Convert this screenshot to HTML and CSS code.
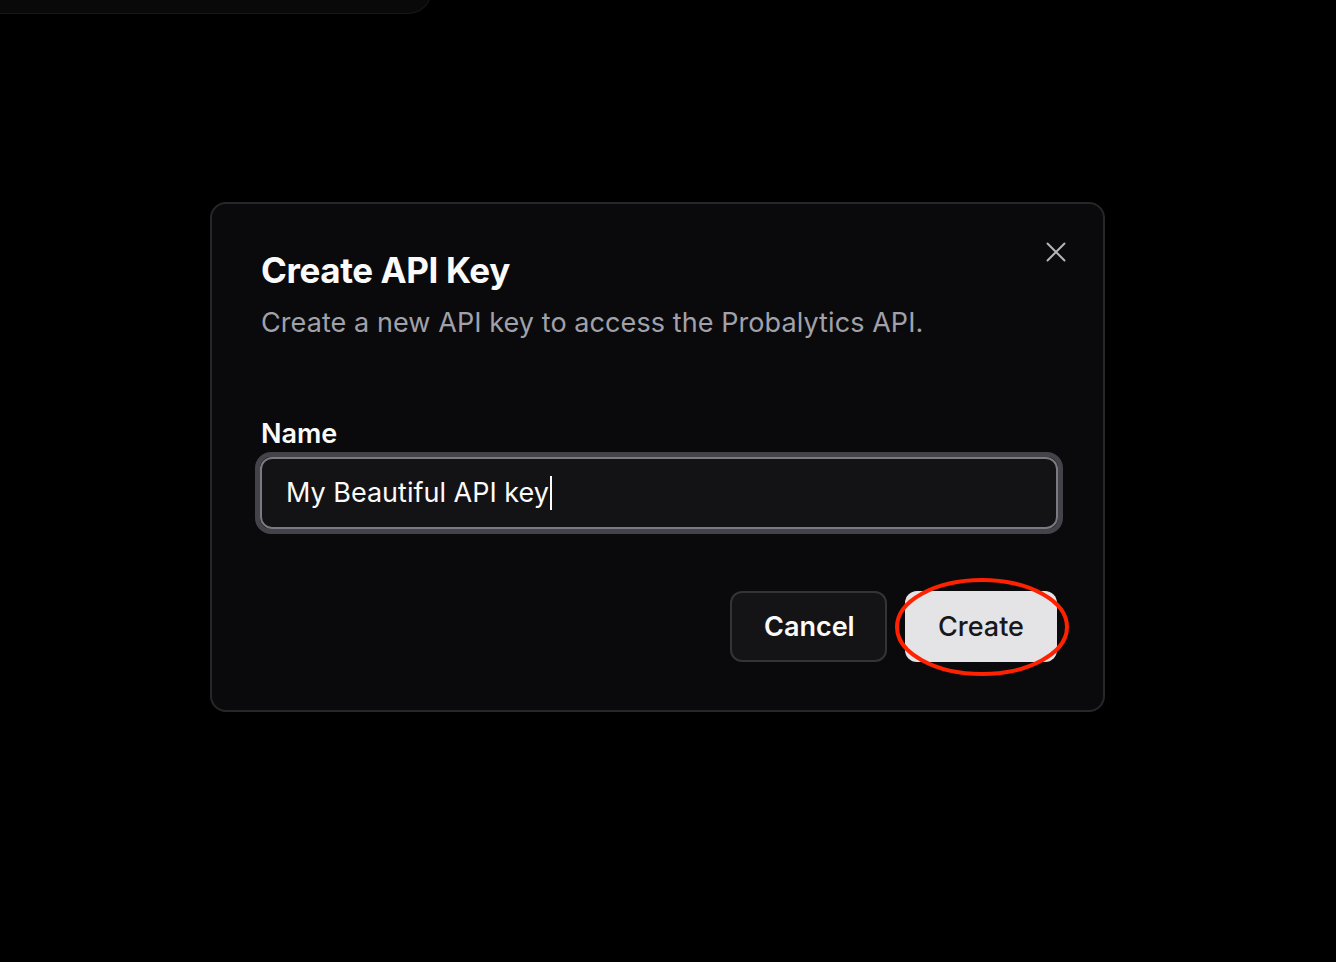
FILE: index.html
```html
<!DOCTYPE html>
<html lang="en">
<head>
<meta charset="utf-8">
<title>Create API Key</title>
<link rel="stylesheet" href="styles.css">
</head>
<body>
<div class="page">
  <div class="bg-card"></div>
</div>
<div class="overlay">
  <div class="dialog" role="dialog">
    <button class="close" aria-label="Close">
      <svg viewBox="0 0 20 20" width="20" height="20" fill="none" stroke="currentColor" stroke-width="2" stroke-linecap="round"><path d="M1.5 1.5 18.5 18.5M18.5 1.5 1.5 18.5"/></svg>
    </button>
    <div class="header">
      <h2 class="title">Create API Key</h2>
      <p class="desc">Create a new API key to access the Probalytics API.</p>
    </div>
    <div class="field">
      <label class="label">Name</label>
      <div class="input-ring">
        <div class="input"><span>My Beautiful API key</span><span class="caret"></span></div>
      </div>
    </div>
    <div class="footer">
      <button class="btn btn-outline">Cancel</button>
      <button class="btn btn-primary">Create</button>
    </div>
    <svg class="annot" width="180" height="104" viewBox="0 0 180 104"><ellipse cx="90" cy="52" rx="85" ry="47" fill="none" stroke="#ff2200" stroke-width="4"/></svg>
  </div>
</div>
</body>
</html>
```

FILE: styles.css
```css
* { box-sizing: border-box; }
html, body { margin: 0; padding: 0; }
body {
  background: #000;
  font-family: Inter, "Noto Sans", sans-serif;
  color: #fafafa;
  width: 1336px;
  height: 962px;
  overflow: hidden;
}
.page { padding: 0; }
.bg-card {
  width: 432px;
  height: 62px;
  margin-top: -48px;
  background: #09090a;
  border: 1px solid #18181b;
  border-radius: 0 0 24px 0;
  border-left: none;
}
.overlay {
  position: fixed;
  inset: 0;
}
.dialog {
  position: absolute;
  left: 210px;
  top: 202px;
  width: 895px;
  height: 510px;
  background: #0a0a0c;
  border: 2px solid #27272a;
  border-radius: 16px;
  padding: 43px 46px 48px 49px;
  display: flex;
  flex-direction: column;
}
.close {
  position: absolute;
  right: 37px;
  top: 38px;
  background: none;
  border: none;
  padding: 0;
  color: #b4b4ba;
  width: 20px;
  height: 20px;
  display: flex;
}
.header { display: flex; flex-direction: column; gap: 11px; }
.title {
  margin: 0;
  font-size: 35px;
  font-weight: 700;
  letter-spacing: -0.4px;
  line-height: 46px;
  color: #fafafa;
}
.desc {
  margin: 0;
  font-size: 27px;
  letter-spacing: 0.08px;
  line-height: 38px;
  color: #a1a1aa;
}
.field {
  margin-top: 74px;
  display: flex;
  flex-direction: column;
  gap: 0;
}
.label {
  font-size: 27px;
  font-weight: 600;
  line-height: 36px;
  color: #fafafa;
}
.input-ring {
  margin-left: -6px;
  margin-right: -6px;
  border: 5px solid #434349;
  border-radius: 16px;
}
.input {
  height: 72px;
  border: 2px solid #7a7a82;
  border-radius: 12px;
  background: #131316;
  padding: 0 24px;
  display: flex;
  align-items: center;
  font-size: 27px;
  color: #fafafa;
}
.input span:first-child { position: relative; top: -1px; }
.caret {
  display: inline-block;
  width: 2px;
  height: 34px;
  background: #fafafa;
  margin-left: 1px;
}
.footer {
  margin-top: auto;
  display: flex;
  justify-content: flex-end;
  gap: 18px;
}
.btn {
  height: 71px;
  border-radius: 12px;
  font-family: inherit;
  font-size: 27px;
  font-weight: 600;
  padding: 0 32px;
}
.btn-outline {
  background: #141416;
  border: 2px solid #333338;
  color: #fafafa;
  width: 157px;
}
.btn-primary {
  background: #e4e4e7;
  border: none;
  color: #18181b;
  font-weight: 500;
  width: 152px;
}
.annot {
  position: absolute;
  left: 680px;
  top: 371px;
  pointer-events: none;
}
```
